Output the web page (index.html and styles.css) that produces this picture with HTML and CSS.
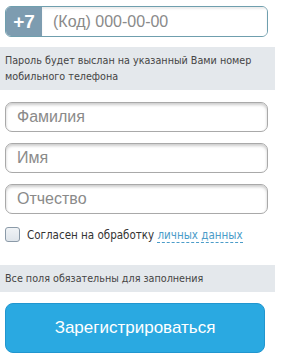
FILE: index.html
```html
<!DOCTYPE html>
<html lang="ru">
  <head>
    <meta charset="UTF-8" />
    <meta name="viewport" content="width=device-width, initial-scale=1.0" />
    <title>Регистрация</title>
    <link rel="stylesheet" href="styles.css">
  </head>
  <body>
    <form class="reg-form">
      <div class="phone">
        <span class="phone-code">+7</span>
        <input class="phone-input" type="text" placeholder="(Код) 000-00-00" />
      </div>

      <p class="note">Пароль будет выслан на указанный Вами номер мобильного телефона</p>

      <input class="field field-first" type="text" placeholder="Фамилия" />
      <input class="field" type="text" placeholder="Имя" />
      <input class="field" type="text" placeholder="Отчество" />

      <label class="agree">
        <span class="checkbox"></span>
        <span class="agree-text">Согласен на обработку <a href="#" class="agree-link">личных данных</a></span>
      </label>

      <p class="note note-single">Все поля обязательны для заполнения</p>

      <button type="button" class="btn">Зарегистрироваться</button>
    </form>
  </body>
</html>
```

FILE: styles.css
```css
body {
  margin: 0;
  padding: 0;
  background: #fff;
  font-family: "Liberation Sans", Arial, sans-serif;
}

.reg-form {
  width: 275px;
  padding-top: 6px;
}

.phone {
  display: flex;
  margin-left: 5px;
  width: 263px;
  height: 31px;
  box-sizing: border-box;
  border: 1px solid #6f9fae;
  border-radius: 6px;
  overflow: hidden;
  box-shadow: inset 0 1px 3px rgba(0, 0, 0, 0.15);
}

.phone-code {
  width: 36px;
  flex-shrink: 0;
  background: #7d9cb0;
  color: #fff;
  font-weight: bold;
  font-size: 19px;
  line-height: 29px;
  text-align: center;
}

.phone-input {
  flex: 1;
  border: 0;
  outline: none;
  padding: 0 0 0 11px;
  font-family: "Liberation Sans", Arial, sans-serif;
  font-size: 16px;
  color: #333;
  background: #fff;
  box-shadow: inset 0 2px 2px rgba(0, 0, 0, 0.08);
}

.note {
  margin: 10px 0 0;
  padding: 6px 5px 5px;
  background: #e4e8ec;
  color: #444;
  font-family: "DejaVu Sans Condensed", "DejaVu Sans", sans-serif;
  font-size: 10.7px;
  line-height: 16px;
}

.note-single {
  margin-top: 23px;
  padding: 6px 5px 5px;
}

.field {
  display: block;
  margin: 11px 0 0 5px;
  width: 263px;
  height: 30px;
  box-sizing: border-box;
  padding: 0 0 0 11px;
  border: 1px solid #a9a9a9;
  border-radius: 7px;
  outline: none;
  background: #fff;
  box-shadow: inset 0 2px 3px rgba(0, 0, 0, 0.2);
  font-family: "Liberation Sans", Arial, sans-serif;
  font-size: 16px;
  color: #333;
}

.field-first {
  margin-top: 12px;
}

.phone-input::placeholder,
.field::placeholder {
  color: #8a8a8a;
}

.agree {
  display: flex;
  align-items: center;
  margin: 13px 0 0 5px;
  height: 15px;
}

.checkbox {
  width: 13px;
  height: 13px;
  border: 1px solid #8b9aa8;
  border-radius: 3px;
  background: linear-gradient(#f0f3f6, #dfe5eb);
  flex-shrink: 0;
}

.agree-text {
  margin-left: 7px;
  font-family: "DejaVu Sans Condensed", "DejaVu Sans", sans-serif;
  font-size: 11.5px;
  color: #333;
}

.agree-link {
  color: #4b9cc9;
  text-decoration: none;
  border-bottom: 1px dashed #4b9cc9;
}

.btn {
  display: block;
  margin: 11px 0 0 5px;
  width: 260px;
  height: 50px;
  border: 1px solid #2196cf;
  border-radius: 8px;
  background: #2aa9e1;
  color: #fff;
  font-family: "Liberation Sans", Arial, sans-serif;
  font-size: 17px;
  cursor: pointer;
}
```
